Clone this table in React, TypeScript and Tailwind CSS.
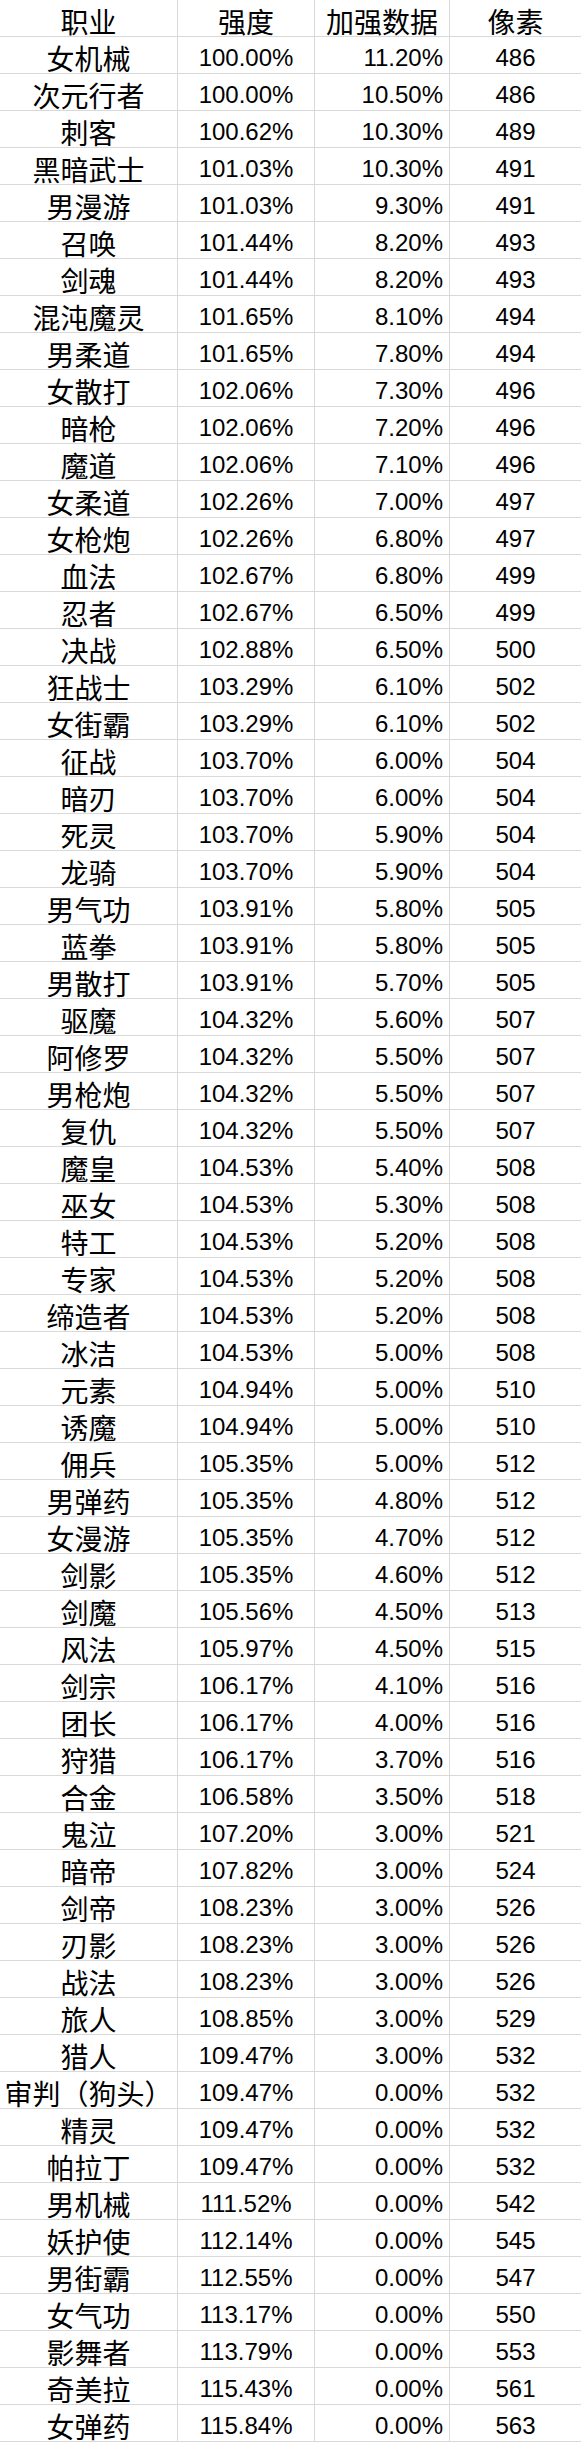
const rows: [string, string, string, string][] = [
  ["女机械", "100.00%", "11.20%", "486"],
  ["次元行者", "100.00%", "10.50%", "486"],
  ["刺客", "100.62%", "10.30%", "489"],
  ["黑暗武士", "101.03%", "10.30%", "491"],
  ["男漫游", "101.03%", "9.30%", "491"],
  ["召唤", "101.44%", "8.20%", "493"],
  ["剑魂", "101.44%", "8.20%", "493"],
  ["混沌魔灵", "101.65%", "8.10%", "494"],
  ["男柔道", "101.65%", "7.80%", "494"],
  ["女散打", "102.06%", "7.30%", "496"],
  ["暗枪", "102.06%", "7.20%", "496"],
  ["魔道", "102.06%", "7.10%", "496"],
  ["女柔道", "102.26%", "7.00%", "497"],
  ["女枪炮", "102.26%", "6.80%", "497"],
  ["血法", "102.67%", "6.80%", "499"],
  ["忍者", "102.67%", "6.50%", "499"],
  ["决战", "102.88%", "6.50%", "500"],
  ["狂战士", "103.29%", "6.10%", "502"],
  ["女街霸", "103.29%", "6.10%", "502"],
  ["征战", "103.70%", "6.00%", "504"],
  ["暗刃", "103.70%", "6.00%", "504"],
  ["死灵", "103.70%", "5.90%", "504"],
  ["龙骑", "103.70%", "5.90%", "504"],
  ["男气功", "103.91%", "5.80%", "505"],
  ["蓝拳", "103.91%", "5.80%", "505"],
  ["男散打", "103.91%", "5.70%", "505"],
  ["驱魔", "104.32%", "5.60%", "507"],
  ["阿修罗", "104.32%", "5.50%", "507"],
  ["男枪炮", "104.32%", "5.50%", "507"],
  ["复仇", "104.32%", "5.50%", "507"],
  ["魔皇", "104.53%", "5.40%", "508"],
  ["巫女", "104.53%", "5.30%", "508"],
  ["特工", "104.53%", "5.20%", "508"],
  ["专家", "104.53%", "5.20%", "508"],
  ["缔造者", "104.53%", "5.20%", "508"],
  ["冰洁", "104.53%", "5.00%", "508"],
  ["元素", "104.94%", "5.00%", "510"],
  ["诱魔", "104.94%", "5.00%", "510"],
  ["佣兵", "105.35%", "5.00%", "512"],
  ["男弹药", "105.35%", "4.80%", "512"],
  ["女漫游", "105.35%", "4.70%", "512"],
  ["剑影", "105.35%", "4.60%", "512"],
  ["剑魔", "105.56%", "4.50%", "513"],
  ["风法", "105.97%", "4.50%", "515"],
  ["剑宗", "106.17%", "4.10%", "516"],
  ["团长", "106.17%", "4.00%", "516"],
  ["狩猎", "106.17%", "3.70%", "516"],
  ["合金", "106.58%", "3.50%", "518"],
  ["鬼泣", "107.20%", "3.00%", "521"],
  ["暗帝", "107.82%", "3.00%", "524"],
  ["剑帝", "108.23%", "3.00%", "526"],
  ["刃影", "108.23%", "3.00%", "526"],
  ["战法", "108.23%", "3.00%", "526"],
  ["旅人", "108.85%", "3.00%", "529"],
  ["猎人", "109.47%", "3.00%", "532"],
  ["审判（狗头）", "109.47%", "0.00%", "532"],
  ["精灵", "109.47%", "0.00%", "532"],
  ["帕拉丁", "109.47%", "0.00%", "532"],
  ["男机械", "111.52%", "0.00%", "542"],
  ["妖护使", "112.14%", "0.00%", "545"],
  ["男街霸", "112.55%", "0.00%", "547"],
  ["女气功", "113.17%", "0.00%", "550"],
  ["影舞者", "113.79%", "0.00%", "553"],
  ["奇美拉", "115.43%", "0.00%", "561"],
  ["女弹药", "115.84%", "0.00%", "563"],
]

const cell = "h-[37px] border-b border-[#d9d9d9] flex items-center pt-[5px] overflow-visible whitespace-nowrap"
const cjk = "font-['Noto_Sans_CJK_SC',sans-serif] text-[28px] leading-none"
const num = "font-['Liberation_Sans',Arial,sans-serif] text-[24px] leading-none"

function App() {
  return (
    <div className="w-[581px] bg-white text-black">
      <div className="grid grid-cols-[178px_137px_135px_131px]">
        <div className={`${cell} ${cjk} justify-center border-r`}>职业</div>
        <div className={`${cell} ${cjk} justify-center border-r`}>强度</div>
        <div className={`${cell} ${cjk} justify-center border-r`}>加强数据</div>
        <div className={`${cell} ${cjk} justify-center`}>像素</div>
        {rows.map(([job, power, buff, px]) => (
          <div key={job} className="contents">
            <div className={`${cell} ${cjk} justify-center border-r`}>{job}</div>
            <div className={`${cell} ${num} justify-center border-r`}>{power}</div>
            <div className={`${cell} ${num} justify-end pr-[6px] border-r`}>{buff}</div>
            <div className={`${cell} ${num} justify-center`}>{px}</div>
          </div>
        ))}
      </div>
    </div>
  )
}

export default App
